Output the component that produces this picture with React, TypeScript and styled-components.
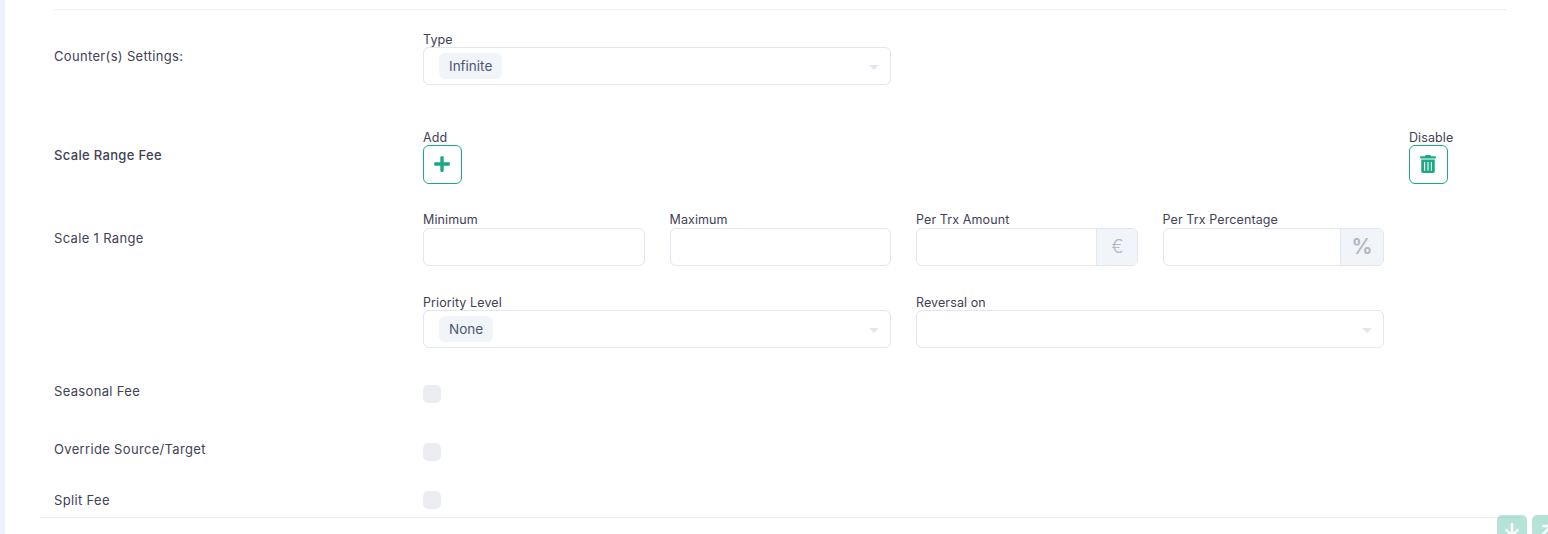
import styled, { createGlobalStyle } from 'styled-components'
import { FaArrowDown, FaPlus, FaTrashAlt } from 'react-icons/fa'

const GlobalStyle = createGlobalStyle`
    html, body {
        margin: 0;
        height: 534px;
        overflow: hidden;
        background: #fff;
    }
    * {
        box-sizing: border-box;
    }
`

const SelectField = ({ value }: { value?: string }) => (
    <Select>
        {value && <Chip>{value}</Chip>}
        <Caret />
    </Select>
)

const App = () => {
    return (
        <Page>
            <GlobalStyle />
            <Rail />
            <Content>
                <Divider />
                <Form>
                    <Row $top={21}>
                        <RowLabel $offset={17}>Counter(s) Settings:</RowLabel>
                        <Fields>
                            <Field $span={2}>
                                <FieldLabel>Type</FieldLabel>
                                <SelectField value="Infinite" />
                            </Field>
                        </Fields>
                    </Row>
                    <Row $top={44}>
                        <RowLabel $offset={18} $strong>
                            Scale Range Fee
                        </RowLabel>
                        <Fields $wide>
                            <Field $span={4}>
                                <FieldLabel>Add</FieldLabel>
                                <IconButton>
                                    <FaPlus />
                                </IconButton>
                            </Field>
                            <Field>
                                <FieldLabel>Disable</FieldLabel>
                                <IconButton>
                                    <FaTrashAlt />
                                </IconButton>
                            </Field>
                        </Fields>
                    </Row>
                    <Row $top={27}>
                        <RowLabel $offset={19}>Scale 1 Range</RowLabel>
                        <Fields>
                            <Field>
                                <FieldLabel $tall>Minimum</FieldLabel>
                                <Input />
                            </Field>
                            <Field>
                                <FieldLabel $tall>Maximum</FieldLabel>
                                <Input />
                            </Field>
                            <Field>
                                <FieldLabel $tall>Per Trx Amount</FieldLabel>
                                <InputGroup>
                                    <GroupInput />
                                    <EuroAddon>€</EuroAddon>
                                </InputGroup>
                            </Field>
                            <Field>
                                <FieldLabel $tall>Per Trx Percentage</FieldLabel>
                                <InputGroup>
                                    <GroupInput />
                                    <PercentAddon>%</PercentAddon>
                                </InputGroup>
                            </Field>
                        </Fields>
                    </Row>
                    <Row $top={28}>
                        <RowLabel />
                        <Fields>
                            <Field $span={2}>
                                <FieldLabel>Priority Level</FieldLabel>
                                <SelectField value="None" />
                            </Field>
                            <Field $span={2}>
                                <FieldLabel>Reversal on</FieldLabel>
                                <SelectField />
                            </Field>
                        </Fields>
                    </Row>
                    <Row $top={37}>
                        <RowLabel $offset={-2}>Seasonal Fee</RowLabel>
                        <Checkbox />
                    </Row>
                    <Row $top={40}>
                        <RowLabel $offset={-2}>Override Source/Target</RowLabel>
                        <Checkbox />
                    </Row>
                    <Row $top={30}>
                        <RowLabel $offset={1}>Split Fee</RowLabel>
                        <Checkbox />
                    </Row>
                </Form>
                <BottomRule />
            </Content>
            <FloatButton $right={21}>
                <FaArrowDown />
            </FloatButton>
            <FloatButton $right={-14}>
                <DiagonalArrow />
            </FloatButton>
        </Page>
    )
}

const Page = styled.div`
    position: relative;
    display: flex;
    width: 1548px;
    height: 534px;
    overflow: hidden;
    font-family: Inter, 'Noto Sans', sans-serif;
    font-size: 13px;
    color: #3f4254;
`

const Rail = styled.div`
    flex: 0 0 5px;
    background: #eef1fa;
`

const Content = styled.div`
    flex: 1;
    min-width: 0;
    padding-top: 9px;
`

const Divider = styled.div`
    height: 1px;
    margin: 0 41px 0 49px;
    background: #eceef3;
`

const Form = styled.div`
    margin-left: 49px;
`

const Row = styled.div<{ $top: number }>`
    display: flex;
    align-items: flex-start;
    margin-top: ${(props) => props.$top}px;
`

const RowLabel = styled.div<{ $offset?: number; $strong?: boolean }>`
    flex: 0 0 369px;
    margin-top: ${(props) => props.$offset || 0}px;
    font-weight: ${(props) => (props.$strong ? 500 : 400)};
    line-height: 16px;
    letter-spacing: 0.33px;
`

const Fields = styled.div<{ $wide?: boolean }>`
    display: grid;
    grid-template-columns: repeat(4, 221.5px) ${(props) => (props.$wide ? '60px' : '')};
    column-gap: 25px;
`

const Field = styled.div<{ $span?: number }>`
    grid-column: span ${(props) => props.$span || 1};
    min-width: 0;
`

const FieldLabel = styled.div<{ $tall?: boolean }>`
    height: ${(props) => (props.$tall ? 17 : 16)}px;
    font-size: 12.5px;
    line-height: 17px;
    letter-spacing: 0.1px;
    white-space: nowrap;
`

const Select = styled.div`
    position: relative;
    display: flex;
    align-items: center;
    height: 38px;
    padding-left: 15px;
    border: 1px solid #e4e6ef;
    border-radius: 6px;
    background: #fff;
`

const Chip = styled.span`
    height: 26px;
    padding: 0 10px;
    border-radius: 6px;
    background: #f1f4f8;
    font-size: 13.5px;
    line-height: 26px;
    color: #4b5675;
`

const Caret = styled.span`
    position: absolute;
    top: 17px;
    right: 11px;
    border-style: solid;
    border-width: 5px 5.5px 0;
    border-color: #e4e6ef transparent transparent;
`

const Input = styled.div`
    height: 38px;
    border: 1px solid #e4e6ef;
    border-radius: 6px;
    background: #fff;
`

const InputGroup = styled.div`
    display: flex;
    height: 38px;
    border: 1px solid #e4e6ef;
    border-radius: 6px;
    overflow: hidden;
`

const GroupInput = styled.div`
    flex: 1;
`

const Addon = styled.div`
    display: flex;
    align-items: center;
    justify-content: center;
    border-left: 1px solid #e4e6ef;
    background: #f1f4f8;
    color: #b5b5c3;
`

const EuroAddon = styled(Addon)`
    flex: 0 0 41px;
    padding-left: 2px;
    font-size: 18px;
    font-weight: 300;
`

const PercentAddon = styled(Addon)`
    flex: 0 0 43px;
    font-size: 21px;
    font-weight: 600;
`

const IconButton = styled.div`
    display: flex;
    width: 38.5px;
    height: 38.5px;
    align-items: center;
    justify-content: center;
    border: 1px solid #19a985;
    border-radius: 6px;
    background: #fff;
    color: #19a985;
    font-size: 18px;
`

const Checkbox = styled.div`
    width: 18px;
    height: 18px;
    border-radius: 5px;
    background: #ebedf3;
`

const BottomRule = styled.div`
    height: 1px;
    margin: 8px 28px 0 35px;
    background: #eceef3;
`

const FloatButton = styled.div<{ $right: number }>`
    position: absolute;
    top: 515px;
    right: ${(props) => props.$right}px;
    display: flex;
    width: 30px;
    height: 30px;
    align-items: center;
    justify-content: center;
    border-radius: 5px;
    background: rgba(27, 167, 132, 0.32);
    color: #fff;
    font-size: 16px;
`

const DiagonalArrow = styled(FaArrowDown)`
    transform: rotate(225deg);
`

export default App
